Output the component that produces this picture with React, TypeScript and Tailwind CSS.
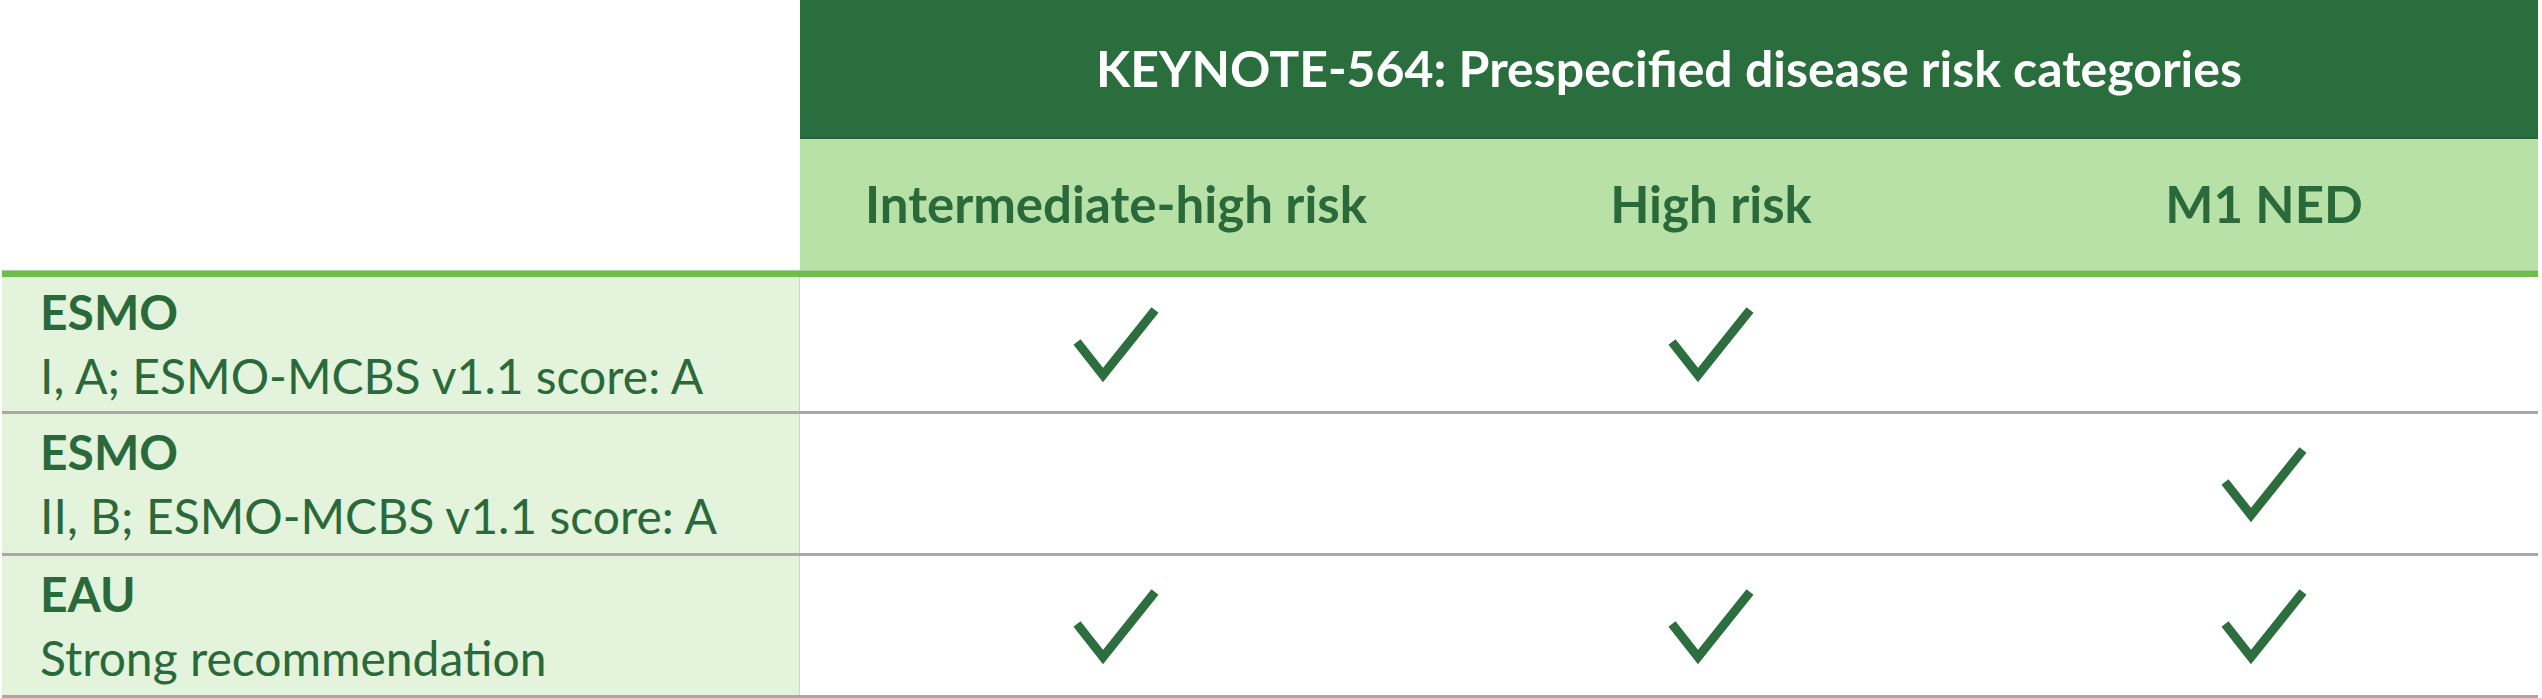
const COLS = ["Intermediate-high risk", "High risk", "M1 NED"];

const ROWS = [
  { org: "ESMO", note: "I, A; ESMO-MCBS v1.1 score: A", checks: [true, true, false], h: "h-[134px]" },
  { org: "ESMO", note: "II, B; ESMO-MCBS v1.1 score: A", checks: [false, false, true], h: "h-[139px]" },
  { org: "EAU", note: "Strong recommendation", checks: [true, true, true], h: "h-[139px]" },
];

function Check() {
  return (
    <svg width="90" height="80" viewBox="0 0 90 80" fill="none">
      <polyline points="6,38 32,71 84,6" stroke="#2c6e3e" strokeWidth="9" strokeLinejoin="miter" />
    </svg>
  );
}

export default function App() {
  return (
    <div className="w-[2542px] h-[698px] bg-white pl-[2px] font-['Lato'] text-[#2a6a3a]">
      {/* Header */}
      <div className="grid grid-cols-[798px_632px_558px_548px]">
        <div className="row-span-2 bg-white" />
        <div className="col-span-3 h-[139px] bg-[#2b6e3d] border-b-2 border-[#27633a] flex items-center justify-center">
          <span className="text-[50px] font-bold text-white">KEYNOTE-564: Prespecified disease risk categories</span>
        </div>
        {COLS.map((c) => (
          <div key={c} className="h-[131px] bg-[#b8e1a8] flex items-center justify-center">
            <span className="text-[51px] font-bold">{c}</span>
          </div>
        ))}
      </div>
      <div className="w-[2536px] h-[7px] bg-[#6cbf4b] border-t border-[#a9cf98]" />

      {/* Body */}
      {ROWS.map((r, i) => (
        <div key={i} className="w-[2536px] border-b-[3px] border-[#a8a8a8]">
          <div className={`grid grid-cols-[798px_632px_558px_548px] ${r.h}`}>
            <div className="bg-[#e3f3dc] border-r border-[#c9d9c2] pl-[38px] flex flex-col justify-center text-[48px] leading-[64px]">
              <span className="font-bold">{r.org}</span>
              <span>{r.note}</span>
            </div>
            {r.checks.map((c, j) => (
              <div key={j} className="flex items-center justify-center">
                {c && <Check />}
              </div>
            ))}
          </div>
        </div>
      ))}
    </div>
  );
}
